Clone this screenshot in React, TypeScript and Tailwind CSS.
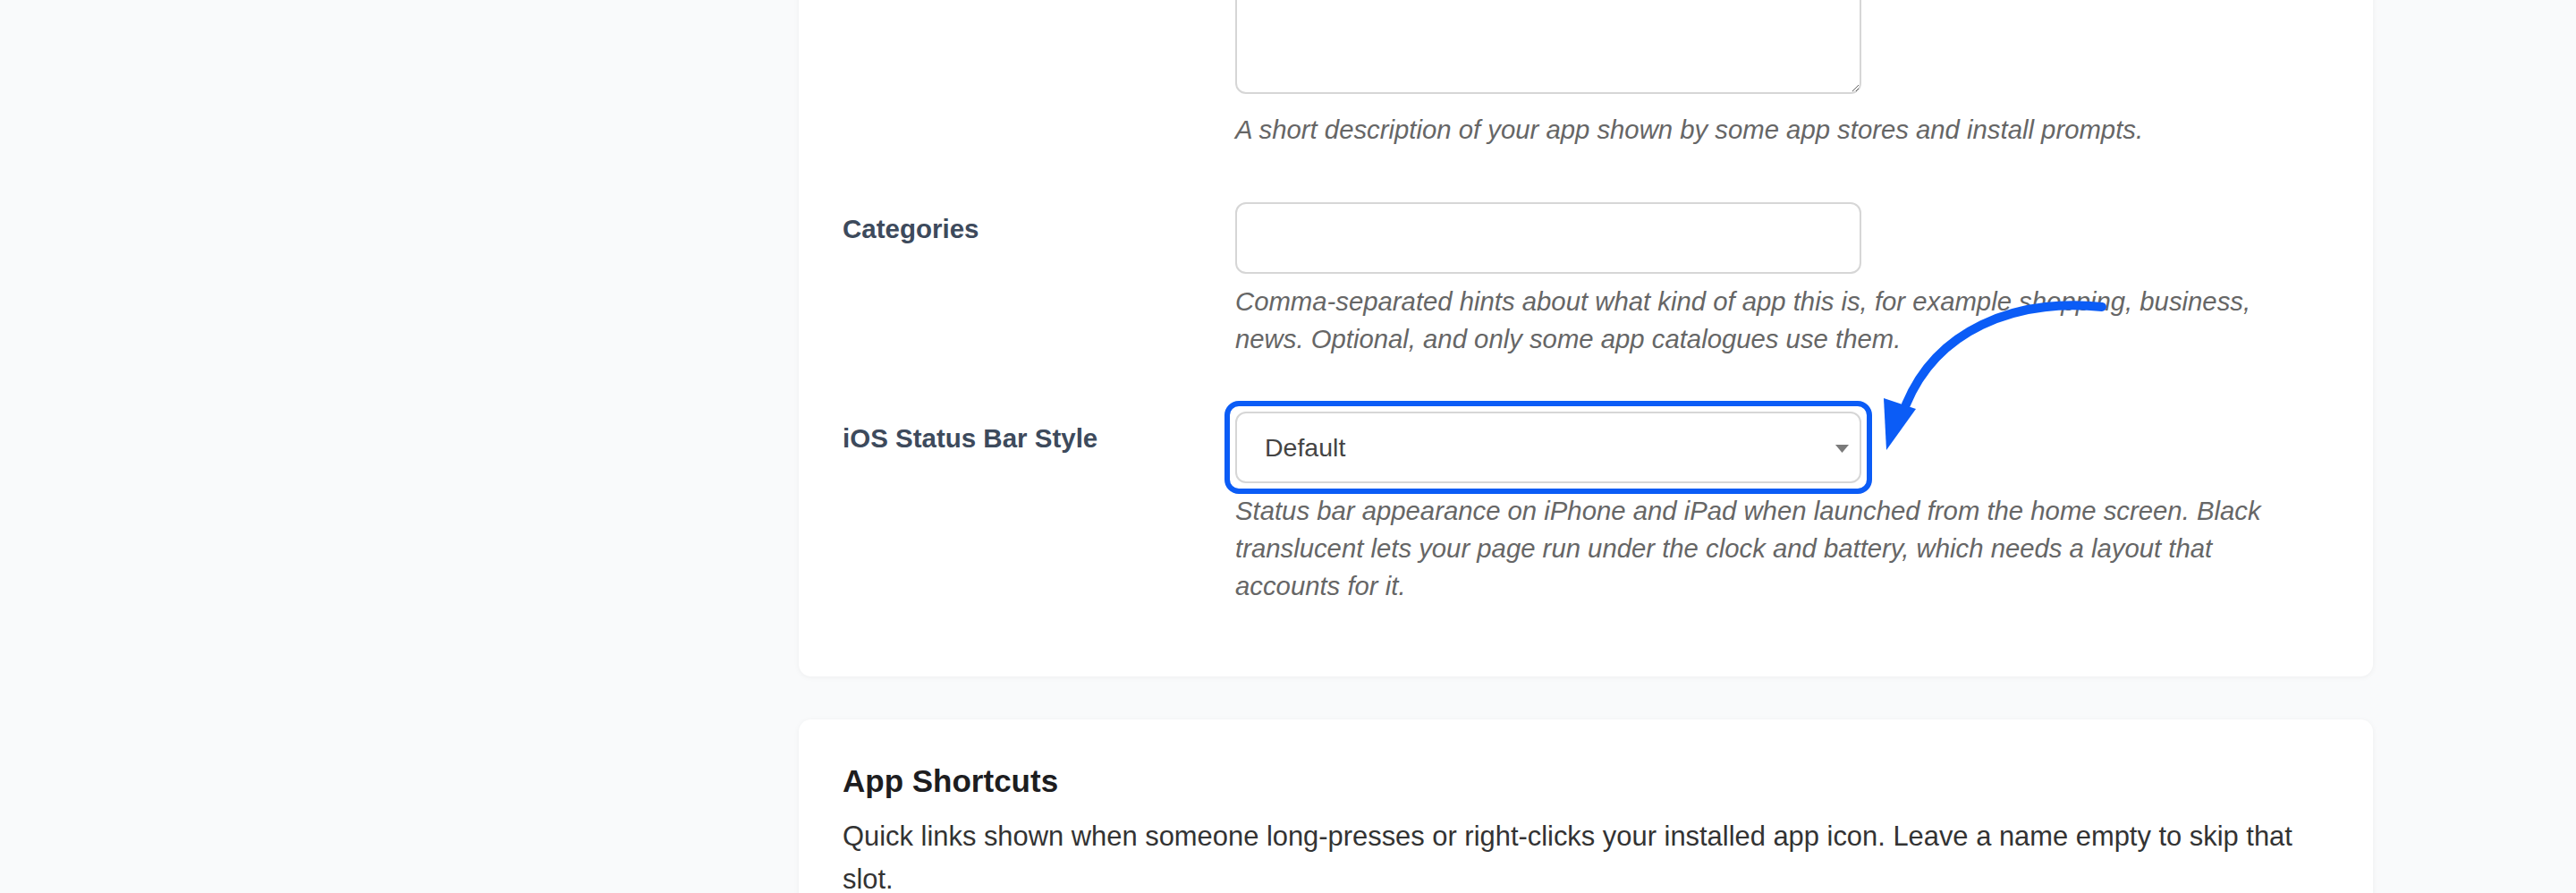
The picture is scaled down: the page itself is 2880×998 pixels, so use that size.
import React from 'react'

const inputCls =
  'block w-[700px] rounded-[12px] border-2 border-[#d6d6d6] bg-white text-[28.5px] text-[#444] focus:outline-none'

function Label({ children }: { children?: React.ReactNode }) {
  return (
    <label className="block pt-[9px] text-[29.5px] leading-[42px] font-semibold text-[#3d4a5c]">
      {children}
    </label>
  )
}

function Help({ children, className = '' }: { children: React.ReactNode; className?: string }) {
  return (
    <p className={`max-w-[1160px] text-[29.3px] leading-[42px] italic text-[#666] ${className}`}>
      {children}
    </p>
  )
}

export default function App() {
  return (
    <div className="relative flex h-[998px] flex-col overflow-hidden bg-[#f9fafb] font-['Liberation_Sans',Arial,sans-serif]">
      <div className="-mt-[203px] flex w-[1760px] flex-col gap-[48px] ml-[893px]">
        <section className="rounded-[14px] bg-white pl-[49px] pr-12 pt-12 pb-[80px] shadow-[0_1px_6px_rgba(0,0,0,0.05)]">
          <div className="flex flex-col gap-[60px]">
            <div className="grid grid-cols-[439px_1fr]">
              <Label />
              <div>
                <textarea className={`${inputCls} h-[260px] resize-y px-[30px] py-4`} />
                <Help className="mt-[19px]">
                  A short description of your app shown by some app stores and install prompts.
                </Help>
              </div>
            </div>

            <div className="grid grid-cols-[439px_1fr]">
              <Label>Categories</Label>
              <div>
                <input type="text" className={`${inputCls} h-[80px] px-[30px]`} />
                <Help className="mt-[10px]">
                  Comma-separated hints about what kind of app this is, for example shopping, business,
                  news. Optional, and only some app catalogues use them.
                </Help>
              </div>
            </div>

            <div className="grid grid-cols-[439px_1fr]">
              <Label>iOS Status Bar Style</Label>
              <div>
                <div className="relative w-[700px]">
                  <select
                    defaultValue="default"
                    className={`${inputCls} h-[80px] appearance-none pl-[31px] pr-16`}
                  >
                    <option value="default">Default</option>
                    <option value="black">Black</option>
                    <option value="black-translucent">Black Translucent</option>
                  </select>
                  <svg
                    className="pointer-events-none absolute right-[14px] top-[37px]"
                    width="15"
                    height="9"
                    viewBox="0 0 15 9"
                  >
                    <polygon points="0,0 15,0 7.5,9" fill="#7a7a7a" />
                  </svg>
                  <div className="pointer-events-none absolute -inset-[12px] rounded-[16px] border-[6px] border-[#0b5cf6]" />
                </div>
                <Help className="mt-[10px]">
                  Status bar appearance on iPhone and iPad when launched from the home screen. Black
                  translucent lets your page run under the clock and battery, which needs a layout that
                  accounts for it.
                </Help>
              </div>
            </div>
          </div>
        </section>

        <section className="rounded-[14px] bg-white pl-[49px] pr-12 pt-12 pb-12 shadow-[0_1px_6px_rgba(0,0,0,0.05)]">
          <h2 className="text-[35px] leading-[41px] font-semibold text-[#1d1d1f]">App Shortcuts</h2>
          <p className="mt-[18px] max-w-[1640px] text-[30.9px] leading-[48px] text-[#333]">
            Quick links shown when someone long-presses or right-clicks your installed app icon. Leave a
            name empty to skip that slot.
          </p>
        </section>
      </div>

      <svg
        className="pointer-events-none absolute left-0 top-0"
        width="2880"
        height="998"
        viewBox="0 0 2880 998"
      >
        <path
          d="M2350 343 C 2250 333, 2165 370, 2131 452"
          fill="none"
          stroke="#0b5cf6"
          strokeWidth="10"
          strokeLinecap="round"
        />
        <polygon points="2106,445 2142,457 2109,503" fill="#0b5cf6" />
      </svg>
    </div>
  )
}
